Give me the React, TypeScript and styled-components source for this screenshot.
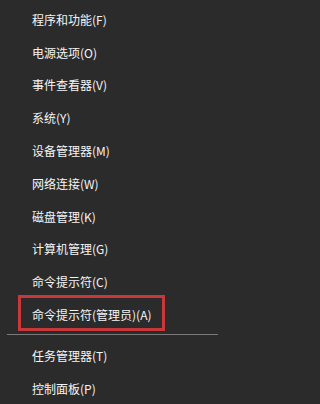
import * as React from "react";
import { styled, createGlobalStyle } from "styled-components";

const GlobalStyle = createGlobalStyle`
  html, body {
    margin: 0;
    padding: 0;
    background: #2b2b2b;
  }
  body {
    font-family: "Noto Sans CJK SC", "Microsoft YaHei", sans-serif;
  }
`;

const Menu = styled.div`
  width: 226px;
  height: 404px;
  background: #2b2b2b;
  padding-top: 3px;
  box-sizing: border-box;
  overflow: hidden;
`;

const Item = styled.div<{ $marked?: boolean }>`
  position: relative;
  height: 32.8px;
  display: flex;
  align-items: center;
  padding-left: 32px;
  font-size: 12px;
  color: #f5f5f5;
  white-space: nowrap;

  ${(p) =>
    p.$marked &&
    `
    &::after {
      content: "";
      position: absolute;
      left: 18px;
      top: -3px;
      width: 147px;
      height: 36px;
      box-sizing: border-box;
      border: 3px solid #c8383b;
    }
  `}
`;

const Separator = styled.div`
  height: 1px;
  margin: 3px 8px 4px 7px;
  background: #7a7a7a;
`;

const topItems = [
  "程序和功能(F)",
  "电源选项(O)",
  "事件查看器(V)",
  "系统(Y)",
  "设备管理器(M)",
  "网络连接(W)",
  "磁盘管理(K)",
  "计算机管理(G)",
  "命令提示符(C)",
];

const bottomItems = ["任务管理器(T)", "控制面板(P)"];

export default function App() {
  return (
    <>
      <GlobalStyle />
      <Menu>
        {topItems.map((t) => (
          <Item key={t}>{t}</Item>
        ))}
        <Item $marked>命令提示符(管理员)(A)</Item>
        <Separator />
        {bottomItems.map((t) => (
          <Item key={t}>{t}</Item>
        ))}
      </Menu>
    </>
  );
}
